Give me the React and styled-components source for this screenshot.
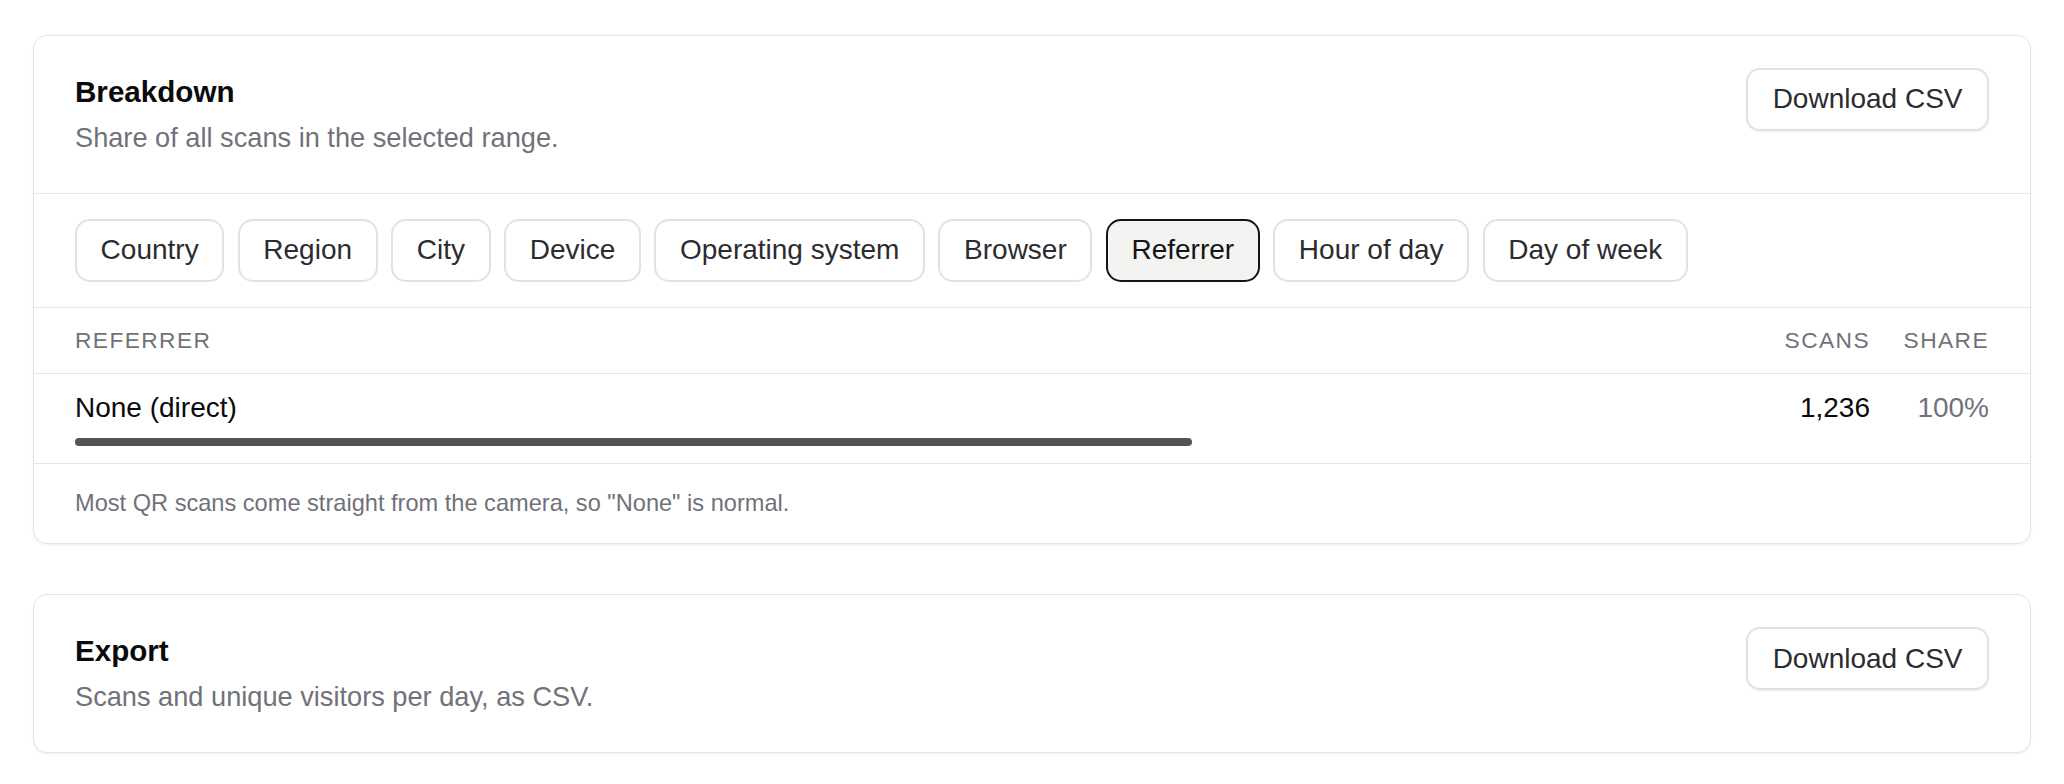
import React from 'react';
import styled, { createGlobalStyle } from 'styled-components';

const colors = {
  ink: '#0a0a0a',
  text: '#2b2b30',
  muted: '#71717a',
  line: '#e4e4e6',
  chipLine: '#e2e2e4',
  activeBg: '#f3f3f1',
  bar: '#545454',
};

const GlobalStyle = createGlobalStyle`
  * { box-sizing: border-box; }
  body {
    margin: 0;
    background: #ffffff;
    font-family: "Liberation Sans", Arial, sans-serif;
    color: ${colors.ink};
  }
`;

const Page = styled.div`
  display: flex;
  flex-direction: column;
  gap: 50px;
  padding: 35px 33px 30px;
`;

const Card = styled.section`
  background: #ffffff;
  border: 1px solid ${colors.line};
  border-radius: 14px;
  box-shadow: 0 1px 3px rgba(0, 0, 0, 0.07);
  overflow: hidden;
`;

const CardHeader = styled.div`
  display: flex;
  justify-content: space-between;
  align-items: flex-start;
  padding: 32px 41px 36px;
  border-bottom: ${({ $divided }) => ($divided ? `1px solid ${colors.line}` : 'none')};
`;

const TitleBlock = styled.div`
  margin-top: 4px;
`;

const Title = styled.h2`
  margin: 0;
  font-size: 29.6px;
  line-height: 40px;
  font-weight: 700;
  color: ${colors.ink};
`;

const Subtitle = styled.p`
  margin: 7px 0 0;
  font-size: 27.2px;
  line-height: 38px;
  color: ${colors.muted};
`;

const OutlineButton = styled.button`
  display: inline-flex;
  align-items: center;
  height: 62.5px;
  padding: 0 24.5px;
  border: 2px solid ${colors.chipLine};
  border-radius: 14px;
  background: #ffffff;
  box-shadow: 0 1px 2px rgba(0, 0, 0, 0.07);
  font-family: inherit;
  font-size: 28px;
  color: ${colors.text};
  cursor: pointer;
`;

const TabBar = styled.div`
  display: flex;
  flex-wrap: wrap;
  gap: 13.5px;
  padding: 25px 41px;
  border-bottom: 1px solid ${colors.line};
`;

const Chip = styled.button`
  display: inline-flex;
  align-items: center;
  height: 62.5px;
  padding: 0 23.6px;
  border: 2px solid ${({ $active }) => ($active ? '#141414' : colors.chipLine)};
  border-radius: 15px;
  background: ${({ $active }) => ($active ? colors.activeBg : '#ffffff')};
  font-family: inherit;
  font-size: 28px;
  color: ${({ $active }) => ($active ? '#141414' : colors.text)};
  cursor: pointer;
`;

const Grid = styled.div`
  display: grid;
  grid-template-columns: 1fr auto 86px;
  column-gap: 33px;
  align-items: start;
  padding: 16.5px 41px;
  border-bottom: 1px solid ${colors.line};
`;

const HeadCell = styled.div`
  font-size: 22.75px;
  line-height: 32px;
  letter-spacing: 1.4px;
  text-transform: uppercase;
  color: ${colors.muted};
  text-align: ${({ $align }) => $align || 'left'};
`;

const NameCell = styled.div`
  display: flex;
  flex-direction: column;
`;

const Name = styled.span`
  font-size: 28px;
  line-height: 36px;
  color: ${colors.ink};
`;

const BarTrack = styled.div`
  margin-top: 12px;
  max-width: 1117px;
  height: 8px;
`;

const BarFill = styled.div`
  height: 100%;
  border-radius: 999px;
  background: ${colors.bar};
`;

const NumCell = styled.div`
  font-size: 28px;
  line-height: 36px;
  text-align: right;
  color: ${({ $muted }) => ($muted ? colors.muted : colors.ink)};
`;

const Footnote = styled.p`
  margin: 0;
  padding: 22.4px 41px;
  font-size: 23.6px;
  line-height: 35px;
  color: ${colors.muted};
`;

const tabs = [
  'Country',
  'Region',
  'City',
  'Device',
  'Operating system',
  'Browser',
  'Referrer',
  'Hour of day',
  'Day of week',
];

const rows = [{ name: 'None (direct)', scans: 1236, share: 100 }];

export default function App() {
  const [active, setActive] = React.useState('Referrer');

  return (
    <Page>
      <GlobalStyle />
      <Card>
        <CardHeader $divided>
          <TitleBlock>
            <Title>Breakdown</Title>
            <Subtitle>Share of all scans in the selected range.</Subtitle>
          </TitleBlock>
          <OutlineButton>Download CSV</OutlineButton>
        </CardHeader>

        <TabBar>
          {tabs.map(tab => (
            <Chip key={tab} $active={tab === active} onClick={() => setActive(tab)}>
              {tab}
            </Chip>
          ))}
        </TabBar>

        <Grid>
          <HeadCell>{active}</HeadCell>
          <HeadCell $align="right">Scans</HeadCell>
          <HeadCell $align="right">Share</HeadCell>
        </Grid>

        {rows.map(row => (
          <Grid key={row.name}>
            <NameCell>
              <Name>{row.name}</Name>
              <BarTrack>
                <BarFill style={{ width: `${row.share}%` }} />
              </BarTrack>
            </NameCell>
            <NumCell>{row.scans.toLocaleString('en-US')}</NumCell>
            <NumCell $muted>{row.share}%</NumCell>
          </Grid>
        ))}

        <Footnote>Most QR scans come straight from the camera, so "None" is normal.</Footnote>
      </Card>

      <Card>
        <CardHeader>
          <TitleBlock>
            <Title>Export</Title>
            <Subtitle>Scans and unique visitors per day, as CSV.</Subtitle>
          </TitleBlock>
          <OutlineButton>Download CSV</OutlineButton>
        </CardHeader>
      </Card>
    </Page>
  );
}
